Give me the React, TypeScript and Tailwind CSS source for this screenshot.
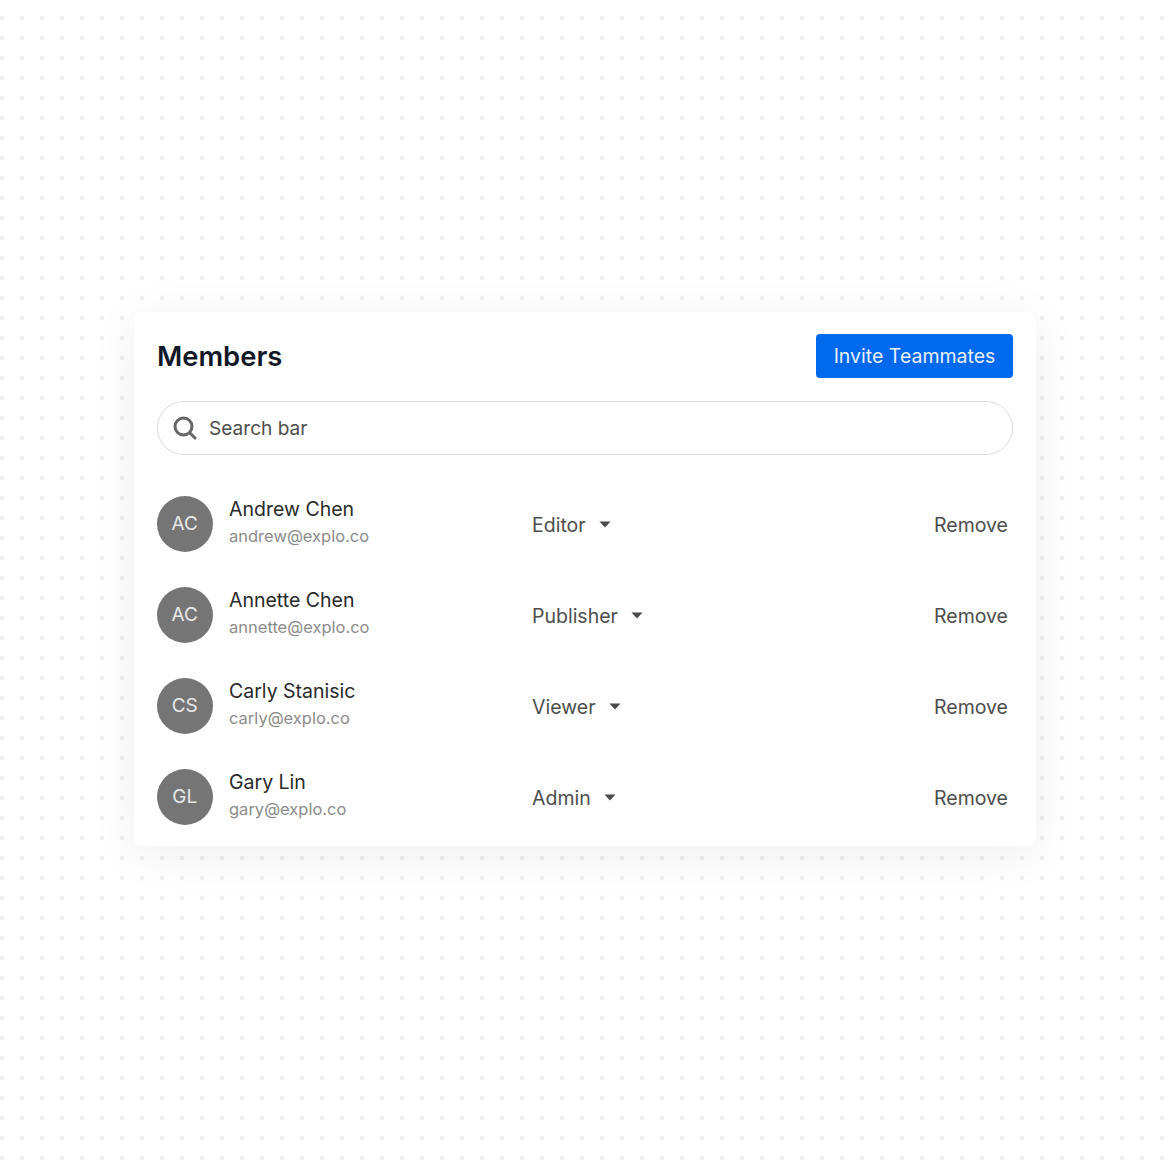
import React from 'react';

const members = [
  { initials: 'AC', name: 'Andrew Chen', email: 'andrew@explo.co', role: 'Editor' },
  { initials: 'AC', name: 'Annette Chen', email: 'annette@explo.co', role: 'Publisher' },
  { initials: 'CS', name: 'Carly Stanisic', email: 'carly@explo.co', role: 'Viewer' },
  { initials: 'GL', name: 'Gary Lin', email: 'gary@explo.co', role: 'Admin' },
];

const MemberRow = ({ initials, name, email, role }: (typeof members)[number]) => (
  <div className="flex h-[56px] items-center">
    <div className="flex h-[56px] w-[55.5px] shrink-0 items-center justify-center rounded-full bg-[#757575] pt-[1px] text-[19px] text-[#e8e8e8]">
      {initials}
    </div>
    <div className="ml-[16.5px] w-[303px] shrink-0 pb-[4px]">
      <div className="text-[19.5px] leading-[26px] text-[#2a2a2a]">{name}</div>
      <div className="mt-[1px] text-[16.5px] leading-[26px] text-[#8c8c8c]">{email}</div>
    </div>
    <div className="flex items-center pt-[3px] text-[19.5px] text-[#4d4d4d]">
      {role}
      <svg className="ml-[13px] -mt-[2px]" width="12" height="7" viewBox="0 0 12 7">
        <path d="M0.5 0.5h11L6 6.5z" fill="#4a4a4a" />
      </svg>
    </div>
    <div className="ml-auto mr-[5px] pt-[3px] text-[19.5px] text-[#4d4d4d]">Remove</div>
  </div>
);

export default function App() {
  return (
    <div className="h-[1160px] w-[1168px] overflow-hidden bg-white bg-[radial-gradient(circle,#eeeeee_2px,transparent_2.5px)] bg-[length:20px_20px] bg-[position:-8px_8px] pl-[134px] pt-[312px] font-['Inter',sans-serif]">
      <div className="h-[534px] w-[902px] rounded-[8px] bg-white px-[23px] pt-[22px] shadow-[0_8px_48px_rgba(0,0,0,0.07)]">
        <div className="flex h-[44px] items-center justify-between">
          <h1 className="pt-[1px] text-[27.4px] font-semibold text-[#111827]">Members</h1>
          <button className="h-[44px] w-[197px] rounded-[4px] bg-[#0069ed] pt-[2px] text-[19.5px] text-[#e6f0ff]">
            Invite Teammates
          </button>
        </div>
        <div className="mt-[23px] flex h-[54px] items-center rounded-full border border-[#dcdcdc] pl-[15px] text-[19.1px] text-[#4d4d4d]">
          <svg width="24" height="24" viewBox="0 0 24 24" fill="none" stroke="#666666" strokeWidth="3" strokeLinecap="round" className="-mt-[1px]">
            <circle cx="10.5" cy="10.5" r="8.5" />
            <path d="M17 17l5 5" />
          </svg>
          <span className="ml-[12px] pt-[1px]">Search bar</span>
        </div>
        <div className="mt-[41px] flex flex-col gap-[35px]">
          {members.map((m) => (
            <MemberRow key={m.email} {...m} />
          ))}
        </div>
      </div>
    </div>
  );
}
